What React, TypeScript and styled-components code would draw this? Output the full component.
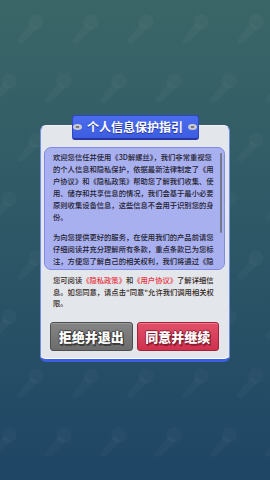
import React from 'react';
import styled, { createGlobalStyle, css } from 'styled-components';

const patternSvg = `<svg xmlns='http://www.w3.org/2000/svg' width='55' height='118'><g fill='rgb(255,255,255)' fill-opacity='0.025' stroke='none'><circle cx='36' cy='22' r='7.5'/><path d='M31 23 L38 28 L23 43 Q19 45 17 41 Z'/><circle cx='9' cy='81' r='7.5'/><path d='M4 82 L11 87 L-4 102 Q-8 104 -10 100 Z'/><circle cx='64' cy='81' r='7.5'/><path d='M59 82 L66 87 L51 102 Q47 104 45 100 Z'/></g></svg>`;
const patternUrl = `url("data:image/svg+xml,${encodeURIComponent(patternSvg)}")`;

const GlobalStyle = createGlobalStyle`
  html, body {
    margin: 0;
    padding: 0;
  }
  body {
    font-family: "Noto Sans CJK SC", "Noto Sans", sans-serif;
  }
`;

const Page = styled.div`
  height: 100vh;
  box-sizing: border-box;
  padding-top: 115px;
  display: flex;
  flex-direction: column;
  align-items: center;
  background-image: ${patternUrl}, linear-gradient(180deg, #3b6667 0%, #2d5766 50%, #1f4565 100%);
  background-repeat: repeat, no-repeat;
  background-size: 55px 118px, 100% 100%;
`;

const Dialog = styled.div`
  width: 190px;
  display: flex;
  flex-direction: column;
  align-items: center;
`;

const Badge = styled.div`
  position: relative;
  z-index: 1;
  margin-bottom: -15px;
  width: 127px;
  height: 25px;
  box-sizing: border-box;
  display: flex;
  align-items: center;
  justify-content: center;
  gap: 5px;
  background: linear-gradient(180deg, #4b6cee 0%, #3d5de2 100%);
  border: 1px solid #2f48bf;
  border-bottom: 2px solid #2638a0;
  border-radius: 3px;
`;

const Ornament = styled.span`
  width: 9px;
  height: 6px;
  border-radius: 50%;
  background: radial-gradient(ellipse at center, #77777f 0 1.6px, #cacad0 2.2px);
  flex: none;
`;

const Title = styled.span`
  color: #ffffff;
  font-weight: 700;
  font-size: 12px;
  line-height: 1;
  text-shadow: 0 1px 0 #22339a;
  white-space: nowrap;
`;

const Card = styled.div`
  width: 190px;
  box-sizing: border-box;
  background: #e3e6eb;
  border: 1px solid #6f8ce8;
  border-top-color: #eef0f4;
  border-bottom: 3px solid #3c5fe0;
  border-radius: 6px;
  padding: 21px 0 8px;
  box-shadow: inset 0 -1px 0 #ffffff;
`;

const InfoBox = styled.div`
  margin: 0 4px 0 3px;
  height: 123px;
  box-sizing: border-box;
  background: #a9b0f0;
  border: 1px solid #828be2;
  border-radius: 7px;
  padding: 3px 2px 0 8px;
  display: flex;
  gap: 4px;
  overflow: hidden;
`;

const TextColumn = styled.div`
  flex: 1;
  min-width: 0;
  overflow: hidden;
  font-size: 7.3px;
  font-weight: 500;
  line-height: 12.1px;
  color: #22222e;
`;

const Para = styled.p`
  margin: 0 0 7px;
`;

const ScrollTrack = styled.div`
  width: 2px;
  flex: none;
  padding-top: 2px;
`;

const Thumb = styled.div`
  height: 80px;
  border-radius: 1px;
  background: #76788c;
`;

const Note = styled.p`
  margin: 5px 12px 0;
  font-size: 7.3px;
  font-weight: 500;
  line-height: 11.6px;
  color: #35291e;
`;

const Link = styled.span`
  color: #e8323c;
`;

const Buttons = styled.div`
  display: flex;
  gap: 4px;
  margin: 12px 10px 0 9px;
`;

const outline = (c: string) => css`
  text-shadow: 1px 0 0 ${c}, -1px 0 0 ${c}, 0 1px 0 ${c}, 0 -1px 0 ${c}, 1px 1px 0 ${c}, 1px 2px 0 ${c};
`;

const Button = styled.button<{ $variant: 'gray' | 'red' }>`
  flex: 1;
  height: 29px;
  box-sizing: border-box;
  padding: 0;
  border-radius: 3px;
  font-family: "Noto Sans CJK SC", "Noto Sans", sans-serif;
  font-weight: 900;
  font-size: 13px;
  line-height: 1;
  color: #ffffff;
  cursor: pointer;
  ${(p) =>
    p.$variant === 'gray'
      ? css`
          background: linear-gradient(180deg, #858585 0%, #6c6c6c 100%);
          border: 1px solid #4e4e4e;
          box-shadow: inset 0 1px 0 #9a9a9a;
          ${outline('#3e3e3e')}
        `
      : css`
          background: linear-gradient(180deg, #e2506a 0%, #cf304d 100%);
          border: 1px solid #a02238;
          box-shadow: inset 0 1px 0 #ee7a8c;
          ${outline('#8e1c31')}
        `}
`;

export default function App() {
  return (
    <>
      <GlobalStyle />
      <Page>
        <Dialog>
          <Badge>
            <Ornament />
            <Title>个人信息保护指引</Title>
            <Ornament />
          </Badge>
          <Card>
            <InfoBox>
              <TextColumn>
                <Para>
                  欢迎您信任并使用《3D解螺丝》，我们非常重视您的个人信息和隐私保护，依据最新法律制定了《用户协议》和《隐私政策》帮助您了解我们收集、使用、储存和共享信息的情况，我们会基于最小必要原则收集设备信息，这些信息不会用于识别您的身份。
                </Para>
                <Para>
                  为向您提供更好的服务，在使用我们的产品前请您仔细阅读并充分理解所有条款，重点条款已为您标注，方便您了解自己的相关权利，我们将通过《隐私政策》向您说明我们如何收集、使用、储存您的个人信息。
                </Para>
              </TextColumn>
              <ScrollTrack>
                <Thumb />
              </ScrollTrack>
            </InfoBox>
            <Note>
              您可阅读<Link>《隐私政策》</Link>和<Link>《用户协议》</Link>了解详细信息。如您同意，请点击"同意"允许我们调用相关权限。
            </Note>
            <Buttons>
              <Button $variant="gray">拒绝并退出</Button>
              <Button $variant="red">同意并继续</Button>
            </Buttons>
          </Card>
        </Dialog>
      </Page>
    </>
  );
}
